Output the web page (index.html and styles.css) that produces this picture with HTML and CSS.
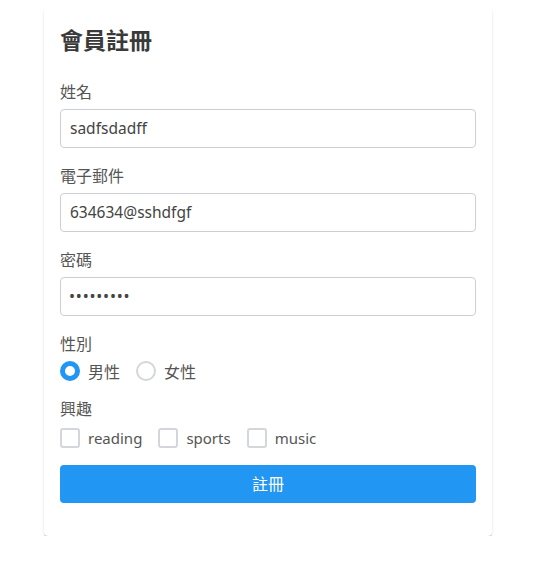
FILE: index.html
```html
<!DOCTYPE html>
<html lang="zh-Hant">
<head>
<meta charset="utf-8">
<title>會員註冊</title>
<link rel="stylesheet" href="styles.css">
</head>
<body>
<div class="card">
  <h2 class="title">會員註冊</h2>
  <div class="group">
    <label class="label">姓名</label>
    <div class="input">sadfsdadff</div>
  </div>
  <div class="group">
    <label class="label">電子郵件</label>
    <div class="input">634634@sshdfgf</div>
  </div>
  <div class="group">
    <label class="label">密碼</label>
    <div class="input pw">•••••••••</div>
  </div>
  <div class="group radios">
    <label class="label">性別</label>
    <div class="options">
      <span class="opt"><span class="radio on"></span>男性</span>
      <span class="opt"><span class="radio"></span>女性</span>
    </div>
  </div>
  <div class="group checks">
    <label class="label">興趣</label>
    <div class="options">
      <span class="opt latin"><span class="check"></span>reading</span>
      <span class="opt latin"><span class="check"></span>sports</span>
      <span class="opt latin"><span class="check"></span>music</span>
    </div>
  </div>
  <div class="btn">註冊</div>
</div>
</body>
</html>
```
FILE: styles.css
```css
body {
  margin: 8px 7px 8px 9px;
  background: #fff;
  font-family: "Noto Sans", "Noto Sans CJK TC", sans-serif;
  color: #4a4a4a;
}
.card {
  width: 448px;
  margin: 0 auto;
  box-sizing: border-box;
  padding: 16px 16px 33px;
  background: #fff;
  border-radius: 4px;
  box-shadow: 0 2px 1px -1px rgba(0,0,0,.2), 0 1px 1px 0 rgba(0,0,0,.12), 0 1px 3px 0 rgba(0,0,0,.1);
}
.title {
  margin: 0 0 24px;
  font-size: 23px;
  line-height: 32px;
  font-weight: 600;
  color: #3a3a3a;
}
.group { margin-bottom: 16px; }
.group.radios { margin-bottom: 14px; }
.group.checks { margin-bottom: 12px; }
.label {
  display: block;
  font-size: 16px;
  line-height: 24px;
  margin-bottom: 5px;
  color: #555;
}
.group.radios .label { margin-bottom: 3px; }
.input {
  height: 39px;
  box-sizing: border-box;
  border: 1px solid #ccd0d6;
  border-radius: 4px;
  padding: 0 9px;
  font-size: 15.5px;
  line-height: 37px;
  color: #444;
}
.input.pw { letter-spacing: 0.8px; font-size: 16px; padding-left: 8px; }
.options {
  display: flex;
  gap: 16px;
  height: 24px;
  align-items: center;
}
.opt {
  display: flex;
  align-items: center;
  gap: 8px;
  font-size: 16px;
  color: #555;
}
.opt.latin { font-size: 15px; }
.radio {
  width: 20px;
  height: 20px;
  box-sizing: border-box;
  border: 2px solid #d3d6db;
  border-radius: 50%;
}
.radio.on { border: 5px solid #2196f3; }
.check {
  width: 20px;
  height: 20px;
  box-sizing: border-box;
  border: 2px solid #d3d6db;
  border-radius: 3px;
}
.btn {
  margin-top: 15px;
  height: 38px;
  line-height: 38px;
  background: #2196f3;
  color: #fff;
  text-align: center;
  border-radius: 4px;
  font-size: 16px;
}
```
